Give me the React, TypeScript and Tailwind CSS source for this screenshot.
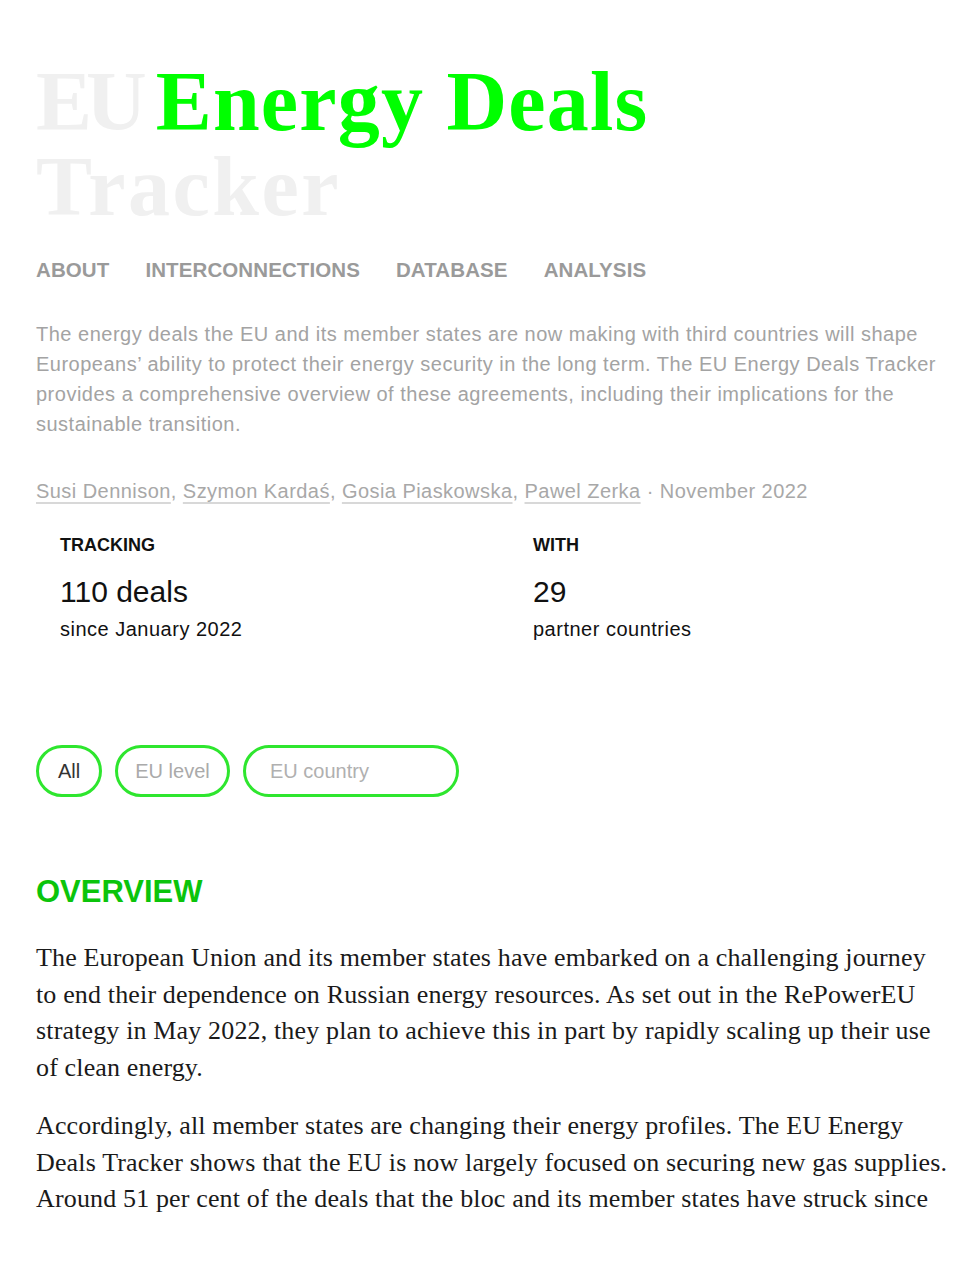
const sans = "font-['Liberation_Sans',Arial,sans-serif]";
const serif = "font-['Liberation_Serif','Times_New_Roman',serif]";

const navItems = ["About", "Interconnections", "Database", "Analysis"];

const authors = ["Susi Dennison", "Szymon Kardaś", "Gosia Piaskowska", "Pawel Zerka"];

const App = () => {
  return (
    <div className={`min-h-screen bg-white pl-9 pt-[59px] ${sans}`}>
      {/* title */}
      <h1 className={`${serif} text-[84px] font-bold leading-[85px] text-[#f0f0f0]`}>
        <span className="tracking-[-6px]">EU </span>
        <span className="tracking-[1.2px] text-[#00ff00]">Energy Deals</span>
        <br />
        <span className="tracking-[2.5px]">Tracker</span>
      </h1>

      {/* nav */}
      <nav className="mt-[27px] flex gap-[36px] text-[20.5px] font-bold uppercase leading-7 tracking-[0.1px] text-[#9a9a9a]">
        {navItems.map((item) => (
          <span key={item}>{item}</span>
        ))}
      </nav>

      {/* intro */}
      <p className="mt-[35px] w-[910px] text-[20px] leading-[30px] tracking-[0.5px] text-[#a3a3a3]">
        The energy deals the EU and its member states are now making with third countries will shape
        Europeans’ ability to protect their energy security in the long term. The EU Energy Deals
        Tracker provides a comprehensive overview of these agreements, including their implications
        for the sustainable transition.
      </p>

      <p className="mt-[37px] text-[20px] leading-[30px] tracking-[0.45px] text-[#a8a8a8]">
        {authors.map((name, i) => (
          <span key={name}>
            <span className="underline decoration-[#d8d8d8] underline-offset-4">{name}</span>
            {i < authors.length - 1 ? ", " : ""}
          </span>
        ))}
        <span> · November 2022</span>
      </p>

      {/* stats */}
      <div className="mt-[27px] grid grid-cols-[473px_1fr] pl-6 text-[#111]">
        <div>
          <div className="text-[18px] font-bold uppercase leading-6">Tracking</div>
          <div className="mt-[17px] text-[30px] leading-9">110 deals</div>
          <div className="mt-[5px] text-[20px] leading-7 tracking-[0.5px]">since January 2022</div>
        </div>
        <div>
          <div className="text-[18px] font-bold uppercase leading-6">With</div>
          <div className="mt-[17px] text-[30px] leading-9">29</div>
          <div className="mt-[5px] text-[20px] leading-7 tracking-[0.5px]">partner countries</div>
        </div>
      </div>

      {/* filters */}
      <div className="mt-[102px] flex gap-[13px] text-[20px]">
        <button className="flex h-[52px] w-[66px] items-center justify-center rounded-full border-[3px] border-[#2ee62e] text-[#333]">
          All
        </button>
        <button className="flex h-[52px] w-[115px] items-center justify-center rounded-full border-[3px] border-[#2ee62e] text-[#aaa]">
          EU level
        </button>
        <div className="flex h-[52px] w-[216px] items-center rounded-full border-[3px] border-[#2ee62e] pl-6 text-[#b0b0b0]">
          EU country
        </div>
      </div>

      {/* overview */}
      <h2 className="mt-[77px] text-[31px] font-bold uppercase leading-9 text-[#0bc40b]">Overview</h2>

      <div className={`${serif} mt-[30px] w-[912px] text-[26px] leading-[36.5px] tracking-[0.15px] text-[#1a1a1a]`}>
        <p>
          The European Union and its member states have embarked on a challenging journey to end
          their dependence on Russian energy resources. As set out in the RePowerEU strategy in May
          2022, they plan to achieve this in part by rapidly scaling up their use of clean energy.
        </p>
        <p className="mt-[22px]">
          Accordingly, all member states are changing their energy profiles. The EU Energy Deals
          Tracker shows that the EU is now largely focused on securing new gas supplies. Around 51
          per cent of the deals that the bloc and its member states have struck since
        </p>
      </div>
    </div>
  );
};

export default App;
